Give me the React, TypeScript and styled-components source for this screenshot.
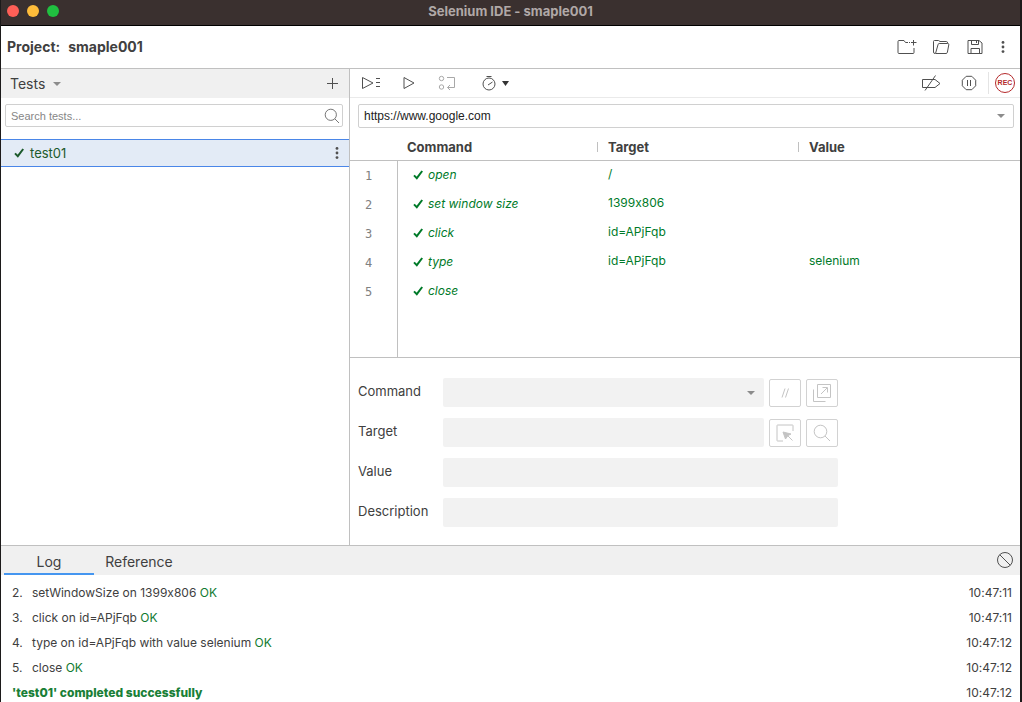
import React from "react";
import styled, { createGlobalStyle, css } from "styled-components";

const GlobalStyle = createGlobalStyle`
  *, *::before, *::after { box-sizing: border-box; }
  body { margin: 0; background: #fff; font-variant-ligatures: no-contextual; }
  body, button, input, select { font-family: Inter, "Liberation Sans", sans-serif; }
`;

const line = "#c0c0c0";
const ink = "#404040";
const green = "#007a29";

const Window = styled.div`
  display: flex;
  flex-direction: column;
  height: 100vh;
  overflow: hidden;
  border-left: 1px solid #1c1a1a;
  border-right: 2px solid #1c1a1a;
  background: #fff;
  color: ${ink};
  font-size: 13px;
`;

const TitleBar = styled.header`
  display: grid;
  grid-template-columns: 1fr auto 1fr;
  align-items: center;
  flex: none;
  height: 26px;
  padding: 0 6px 4px;
  border-bottom: 1px solid #000;
  background: #3a302f;
`;

const Lights = styled.div`
  display: flex;
  gap: 8px;
`;

const Light = styled.button<{ $color: string }>`
  width: 12px;
  height: 12px;
  padding: 0;
  border: 0;
  border-radius: 50%;
  background: ${(p) => p.$color};
`;

const WindowTitle = styled.div`
  color: #b0a8a7;
  font-size: 13px;
  line-height: 20px;
  font-weight: 700;
`;

const ProjectBar = styled.div`
  display: flex;
  align-items: center;
  justify-content: space-between;
  flex: none;
  height: 43px;
  padding: 0 6px;
  border-bottom: 1px solid ${line};
`;

const ProjectName = styled.h1`
  display: flex;
  gap: 8px;
  margin: 0;
  font-size: 14px;
  line-height: 20px;
  font-weight: 700;
`;

const Group = styled.div`
  display: flex;
  align-items: center;
`;

const IconButton = styled.button<{ $width?: number }>`
  display: flex;
  align-items: center;
  justify-content: center;
  gap: 5px;
  flex: none;
  width: ${(p) => p.$width ?? 38}px;
  height: 28px;
  padding: 0;
  border: 0;
  background: none;
  color: #505050;
  &:disabled { color: #a8a8a8; }
`;

const Main = styled.div`
  display: grid;
  grid-template-columns: 349px minmax(0, 1fr);
  flex: 1;
  min-height: 0;
`;

const Sidebar = styled.aside`
  border-right: 1px solid ${line};
`;

const SidebarHeader = styled.div`
  display: flex;
  align-items: center;
  justify-content: space-between;
  height: 29px;
  padding: 0 2px 0 9px;
  background: #f0f0f0;
`;

const ViewMenu = styled.button`
  display: flex;
  align-items: center;
  gap: 8px;
  padding: 0;
  border: 0;
  background: none;
  color: ${ink};
  font-size: 14px;
  line-height: 20px;
`;

const SearchBox = styled.label`
  display: flex;
  align-items: center;
  height: 23px;
  margin: 6px 6px 12px 4px;
  padding-right: 2px;
  border: 1px solid #d0d0d0;
  border-radius: 2px;
  color: #777;
`;

const SearchInput = styled.input`
  flex: 1;
  min-width: 0;
  padding: 0 5px;
  border: 0;
  outline: 0;
  background: none;
  font-family: "Liberation Sans", sans-serif;
  font-size: 11px;
  &::placeholder { color: #868686; }
`;

const TestRow = styled.div`
  display: flex;
  align-items: center;
  justify-content: space-between;
  height: 28px;
  padding-left: 13px;
  border: solid #4a86e8;
  border-width: 1px 0;
  background: #e3ebf6;
  color: #1c5a2c;
`;

const TestName = styled.div`
  display: flex;
  align-items: center;
  gap: 5px;
`;

const Editor = styled.main`
  display: flex;
  flex-direction: column;
  min-width: 0;
`;

const Toolbar = styled.div`
  display: flex;
  justify-content: space-between;
  height: 29px;
  padding-left: 2px;
  border-bottom: 1px solid #eaeaea;
`;

const Divider = styled.span`
  width: 1px;
  height: 22px;
  background: #e4e4e4;
`;

const RecordButton = styled.button`
  display: flex;
  align-items: center;
  justify-content: center;
  width: 20px;
  height: 20px;
  margin: 0 5px 0 6px;
  padding: 0;
  border: 1px solid #b5292b;
  border-radius: 50%;
  background: #fff;
  color: #b5292b;
  font-family: "Liberation Sans", sans-serif;
  font-size: 7px;
  line-height: 18px;
  font-weight: 700;
`;

const UrlBox = styled.div`
  display: flex;
  align-items: center;
  height: 24px;
  margin: 6px 6px 7px 8px;
  border: 1px solid #d0d0d0;
  border-radius: 2px;
`;

const UrlInput = styled.input`
  flex: 1;
  min-width: 0;
  padding: 0 5px;
  border: 0;
  outline: 0;
  background: none;
  color: #222;
  font-family: "Liberation Sans", sans-serif;
  font-size: 12px;
`;

const Steps = styled.table`
  flex: 1;
  width: 100%;
  border-spacing: 0;
  table-layout: fixed;
`;

const StepsArea = styled.div`
  display: flex;
  flex-direction: column;
  flex: 1;
  min-height: 0;
  border-bottom: 1px solid ${line};
`;

const HeadCell = styled.th`
  height: 26px;
  padding: 0;
  border-bottom: 1px solid ${line};
  font-size: 13px;
  line-height: 16px;
  font-weight: 700;
  text-align: left;
`;

const HeadLabel = styled.span<{ $ruled?: boolean }>`
  display: flex;
  align-items: center;
  padding: 0 0 1px 9px;
  ${(p) =>
    p.$ruled &&
    css`
      &::before {
        content: "";
        width: 1px;
        height: 10px;
        margin: 0 10px 0 -11px;
        background: ${line};
      }
    `}
`;

const NumberCell = styled.td`
  padding: 0 10px 0 0;
  border-right: 1px solid ${line};
  color: #808080;
  font-family: "DejaVu Sans Mono", monospace;
  font-size: 12px;
  text-align: center;
`;

const StepRow = styled.tr`
  height: 29px;
`;

const StepCell = styled.td`
  padding: 0 0 3px 9px;
  color: ${green};
  font-size: 12px;
  line-height: 16px;
`;

const StepName = styled.span`
  display: flex;
  align-items: center;
  gap: 4px;
  padding: 2px 0 0 6px;
  font-style: italic;
`;

const Form = styled.form`
  display: grid;
  grid-template-columns: 85px 395px;
  grid-auto-rows: 29px;
  align-items: center;
  gap: 11px 0;
  flex: none;
  height: 187px;
  padding: 20px 8px;
`;

const FieldLabel = styled.label`
  padding-bottom: 3px;
  font-size: 13px;
  line-height: 16px;
`;

const fieldLook = css`
  width: 100%;
  height: 29px;
  padding: 0 8px;
  border: 0;
  border-radius: 2px;
  background: #f2f2f2;
  color: ${ink};
  font-size: 12px;
`;

const WideInput = styled.input`
  ${fieldLook}
`;

const FieldWithActions = styled.div`
  display: flex;
  align-items: center;
  gap: 5px;
`;

const FlexInput = styled.input`
  ${fieldLook}
  flex: 1;
  min-width: 0;
`;

const SelectWrap = styled.div`
  display: grid;
  flex: 1;
  align-items: center;
  > * { grid-area: 1 / 1; }
  > svg { justify-self: end; margin-right: 9px; }
`;

const CommandSelect = styled.select`
  ${fieldLook}
  appearance: none;
  opacity: 1;
`;

const ActionButton = styled.button`
  display: flex;
  align-items: center;
  justify-content: center;
  flex: none;
  width: 32px;
  height: 28px;
  padding: 0;
  border: 1px solid #d2d2d2;
  border-radius: 2px;
  background: #fff;
  color: #c4c4c4;
`;

const Console = styled.section`
  flex: none;
  height: 157px;
  overflow: hidden;
  border-top: 1px solid ${line};
`;

const TabBar = styled.div`
  display: flex;
  align-items: flex-start;
  justify-content: space-between;
  height: 29px;
  padding-left: 3px;
  background: #f0f0f0;
`;

const Tab = styled.button<{ $active?: boolean }>`
  width: 90px;
  height: 29px;
  padding: 4px 0 0;
  border: 0;
  border-bottom: 2px solid ${(p) => (p.$active ? "#4596f0" : "transparent")};
  background: none;
  color: ${ink};
  font-size: 14px;
  line-height: 20px;
`;

const LogList = styled.ol`
  margin: 0;
  padding: 5px 8px 0 11px;
  list-style: none;
`;

const LogLine = styled.li`
  display: flex;
  justify-content: space-between;
  font-size: 12px;
  line-height: 25px;
`;

const LogNumber = styled.span`
  display: inline-block;
  width: 20px;
`;

const Ok = styled.span`
  color: #107a30;
`;

const Done = styled.strong`
  color: #1a7f37;
  font-weight: 800;
`;

type IconProps = { w: number; h: number; children: React.ReactNode };
const Icon = ({ w, h, children }: IconProps) => (
  <svg width={w} height={h} viewBox={`0 0 ${w} ${h}`} fill="none" stroke="currentColor" aria-hidden="true">
    {children}
  </svg>
);

const Caret = ({ color = "#8c8c8c" }: { color?: string }) => (
  <Icon w={8} h={4}><path d="M0 0H8L4 4Z" fill={color} stroke="none" /></Icon>
);

const Check = () => (
  <Icon w={11} h={11}><path d="M1 5.4 3.8 8.2 9.2 1" strokeWidth="2" /></Icon>
);

const Dots = () => (
  <Icon w={4} h={14}>
    <g fill="currentColor" stroke="none">
      <circle cx="2" cy="2.4" r="1.4" /><circle cx="2" cy="7" r="1.4" /><circle cx="2" cy="11.6" r="1.4" />
    </g>
  </Icon>
);

const Magnifier = () => (
  <Icon w={18} h={18}><circle cx="7.5" cy="7.5" r="6.3" /><path d="M12 12 17 17" /></Icon>
);

const steps = [
  ["open", "/", ""],
  ["set window size", "1399x806", ""],
  ["click", "id=APjFqb", ""],
  ["type", "id=APjFqb", "selenium"],
  ["close", "", ""],
];

const logs = [
  ["2.", "setWindowSize on 1399x806", "10:47:11"],
  ["3.", "click on id=APjFqb", "10:47:11"],
  ["4.", "type on id=APjFqb with value selenium", "10:47:12"],
  ["5.", "close", "10:47:12"],
];

export default function App() {
  return (
    <Window>
      <GlobalStyle />
      <TitleBar>
        <Lights>
          <Light $color="#ff5f57" aria-label="Close" />
          <Light $color="#febc3a" aria-label="Minimize" />
          <Light $color="#20c040" aria-label="Zoom" />
        </Lights>
        <WindowTitle>Selenium IDE - smaple001</WindowTitle>
      </TitleBar>

      <ProjectBar>
        <ProjectName><span>Project:</span><span>smaple001</span></ProjectName>
        <Group>
          <IconButton $width={34} aria-label="New project">
            <Icon w={20} h={16}>
              <path d="M11 3.5H8.5L7 1.5H2Q1 1.5 1 2.5V13.5Q1 14.5 2 14.5H16Q17 14.5 17 13.5V9M12 3.5H13M16.5 1V6.5M14 3.5H19.5" />
            </Icon>
          </IconButton>
          <IconButton $width={34} aria-label="Open project">
            <Icon w={18} h={16}>
              <path d="M3 14.5Q1.5 14.5 1.5 13V2.5Q1.5 1.5 2.5 1.5H6.5L8 2.5H14.5Q15.5 2.5 15.5 4" />
              <path d="M7.2 4.5H15.8Q17 4.5 16.8 5.7L15.4 13.3Q15.1 14.5 14 14.5H3.5L6 5.7Q6.2 4.5 7.2 4.5Z" />
            </Icon>
          </IconButton>
          <IconButton $width={34} aria-label="Save project">
            <Icon w={16} h={16}>
              <path d="M1 1.5H12L15 4V14.5H1ZM4.5 1.5V5.5H11.5V1.5M9.5 2V4M4 14.5V9.5H12.5V14.5" />
            </Icon>
          </IconButton>
          <IconButton $width={22} aria-label="More options"><Dots /></IconButton>
        </Group>
      </ProjectBar>

      <Main>
        <Sidebar>
          <SidebarHeader>
            <ViewMenu>Tests <Caret /></ViewMenu>
            <IconButton $width={30} aria-label="Add test">
              <Icon w={11} h={11}><path d="M5.5 0V11M0 5.5H11" /></Icon>
            </IconButton>
          </SidebarHeader>
          <SearchBox>
            <SearchInput type="text" placeholder="Search tests..." aria-label="Search tests" />
            <Icon w={16} h={16}><circle cx="6.8" cy="6.8" r="5.6" /><path d="M10.8 10.8 15 15" /></Icon>
          </SearchBox>
          <TestRow>
            <TestName><Check />test01</TestName>
            <IconButton $width={24} aria-label="Test options"><Dots /></IconButton>
          </TestRow>
        </Sidebar>

        <Editor>
          <Toolbar>
            <Group>
              <IconButton aria-label="Run all tests">
                <Icon w={20} h={14}><path d="M1.5 1.5 12 7 1.5 12.5ZM15 2.5H19M15 6.5H19M15 10.5H19" /></Icon>
              </IconButton>
              <IconButton aria-label="Run current test">
                <Icon w={12} h={14}><path d="M1 1.5 11 7 1 12.5Z" /></Icon>
              </IconButton>
              <IconButton disabled aria-label="Step over">
                <Icon w={18} h={16}>
                  <circle cx="3.5" cy="3.5" r="2.2" /><circle cx="3.5" cy="12" r="2.2" />
                  <path d="M9 2.5H16.5V12.5H9.5M12 10 9.5 12.5 12 15" />
                </Icon>
              </IconButton>
              <IconButton $width={58} aria-label="Test execution speed">
                <Icon w={16} h={16}>
                  <circle cx="8" cy="9" r="6" /><path d="M5.5 1.5H10.5M7 10 11.5 7" />
                </Icon>
                <Icon w={7} h={5}><path d="M0 0H7L3.5 5Z" fill="#333" stroke="none" /></Icon>
              </IconButton>
            </Group>
            <Group>
              <IconButton aria-label="Disable breakpoints">
                <Icon w={20} h={16}><path d="M1.5 4.5H14L19 8.5 14 12.5H1.5ZM4 15.5 14.5.5" /></Icon>
              </IconButton>
              <IconButton aria-label="Pause on exceptions">
                <Icon w={16} h={16}>
                  <path d="M5.2 1.3H10.8L14.7 5.2V10.8L10.8 14.7H5.2L1.3 10.8V5.2ZM6.5 5V11M9.5 5V11" />
                </Icon>
              </IconButton>
              <Divider />
              <RecordButton aria-label="Start recording">REC</RecordButton>
            </Group>
          </Toolbar>

          <UrlBox>
            <UrlInput type="text" defaultValue="https://www.google.com" aria-label="Playback base URL" />
            <IconButton $width={24} aria-label="Show URLs"><Caret /></IconButton>
          </UrlBox>

          <StepsArea>
            <Steps>
              <colgroup>
                <col style={{ width: 48 }} />
                <col style={{ width: "30%" }} />
                <col style={{ width: "30%" }} />
                <col />
              </colgroup>
              <thead>
                <tr>
                  <HeadCell aria-label="Step" />
                  <HeadCell><HeadLabel>Command</HeadLabel></HeadCell>
                  <HeadCell><HeadLabel $ruled>Target</HeadLabel></HeadCell>
                  <HeadCell><HeadLabel $ruled>Value</HeadLabel></HeadCell>
                </tr>
              </thead>
              <tbody>
                {steps.map(([command, target, value], i) => (
                  <StepRow key={i}>
                    <NumberCell>{i + 1}</NumberCell>
                    <StepCell><StepName><Check />{command}</StepName></StepCell>
                    <StepCell>{target}</StepCell>
                    <StepCell>{value}</StepCell>
                  </StepRow>
                ))}
                <tr>
                  <NumberCell />
                  <StepCell colSpan={3} />
                </tr>
              </tbody>
            </Steps>
          </StepsArea>

          <Form>
            <FieldLabel htmlFor="command">Command</FieldLabel>
            <FieldWithActions>
              <SelectWrap>
                <CommandSelect id="command" disabled><option></option></CommandSelect>
                <Caret />
              </SelectWrap>
              <ActionButton type="button" disabled aria-label="Disable command">
                <Icon w={8} h={10}><path d="M1 9.5 4 .5M4.5 9.5 7.5 .5" /></Icon>
              </ActionButton>
              <ActionButton type="button" disabled aria-label="Open in new window">
                <Icon w={20} h={20}>
                  <path d="M5.5 1.5H18.5V14.5H5.5ZM1.5 6.5V18.5H13.5M9 11 15 5M10.5 4.5H15.5V9.5" />
                </Icon>
              </ActionButton>
            </FieldWithActions>
            <FieldLabel htmlFor="target">Target</FieldLabel>
            <FieldWithActions>
              <FlexInput id="target" type="text" disabled />
              <ActionButton type="button" disabled aria-label="Select target in page">
                <Icon w={18} h={18}>
                  <path d="M7 17H1.5Q1 17 1 16.5V1.5Q1 1 1.5 1H16.5Q17 1 17 1.5V7M11 11 16.5 16.5" />
                  <path d="M7 8 15 10 12 11.5 9.5 15Z" fill="currentColor" />
                </Icon>
              </ActionButton>
              <ActionButton type="button" disabled aria-label="Find target in page"><Magnifier /></ActionButton>
            </FieldWithActions>
            <FieldLabel htmlFor="value">Value</FieldLabel>
            <WideInput id="value" type="text" disabled />
            <FieldLabel htmlFor="description">Description</FieldLabel>
            <WideInput id="description" type="text" disabled />
          </Form>
        </Editor>
      </Main>

      <Console>
        <TabBar>
          <Group role="tablist">
            <Tab $active role="tab" aria-selected="true">Log</Tab>
            <Tab role="tab" aria-selected="false">Reference</Tab>
          </Group>
          <IconButton $width={30} aria-label="Clear log">
            <Icon w={18} h={18}><circle cx="9" cy="9" r="7.5" /><path d="M3.7 3.7 14.3 14.3" /></Icon>
          </IconButton>
        </TabBar>
        <LogList>
          {logs.map(([n, text, time]) => (
            <LogLine key={n}>
              <span><LogNumber>{n}</LogNumber>{text} <Ok>OK</Ok></span>
              <time>{time}</time>
            </LogLine>
          ))}
          <LogLine>
            <Done>'test01' completed successfully</Done>
            <time>10:47:12</time>
          </LogLine>
        </LogList>
      </Console>
    </Window>
  );
}
